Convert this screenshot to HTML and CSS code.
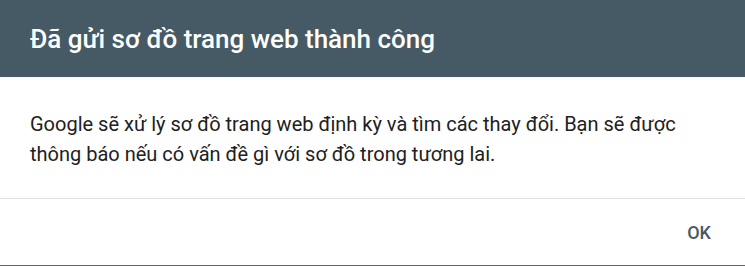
FILE: index.html
```html
<!DOCTYPE html>
<html lang="vi">
<head>
<meta charset="utf-8">
<link rel="stylesheet" href="styles.css">
</head>
<body>
<div class="dialog">
  <div class="header">
    <h1 class="title">Đã gửi sơ đồ trang web thành công</h1>
  </div>
  <div class="content">
    <p class="message">Google sẽ xử lý sơ đồ trang web định kỳ và tìm các thay đổi. Bạn sẽ được thông báo nếu có vấn đề gì với sơ đồ trong tương lai.</p>
  </div>
  <div class="actions">
    <button class="btn">OK</button>
  </div>
</div>
</body>
</html>
```
FILE: styles.css
```css
html, body {
  margin: 0;
  padding: 0;
  background: #ffffff;
}
.dialog {
  width: 745px;
  height: 266px;
  box-sizing: border-box;
  display: flex;
  flex-direction: column;
  font-family: Roboto, "Noto Sans", sans-serif;
  border-bottom: 1px solid #616161;
}
.header {
  background: #455a64;
  height: 77px;
  box-sizing: border-box;
  padding: 0 30px;
  display: flex;
  align-items: center;
}
.title {
  margin: 0;
  color: #ffffff;
  font-size: 26px;
  font-weight: 500;
  line-height: 32px;
}
.content {
  padding: 32px 30px 0 30px;
  height: 122px;
  box-sizing: border-box;
  border-bottom: 1px solid #e0e0e0;
}
.message {
  margin: 0;
  color: #212121;
  font-size: 20px;
  line-height: 30px;
}
.actions {
  flex: 1;
  display: flex;
  justify-content: flex-end;
  align-items: center;
  padding-right: 20px;
}
.btn {
  background: transparent;
  border: none;
  color: #455a64;
  font-family: Roboto, "Noto Sans", sans-serif;
  font-size: 18px;
  font-weight: 500;
  padding: 8px 14px;
  cursor: pointer;
}
```
